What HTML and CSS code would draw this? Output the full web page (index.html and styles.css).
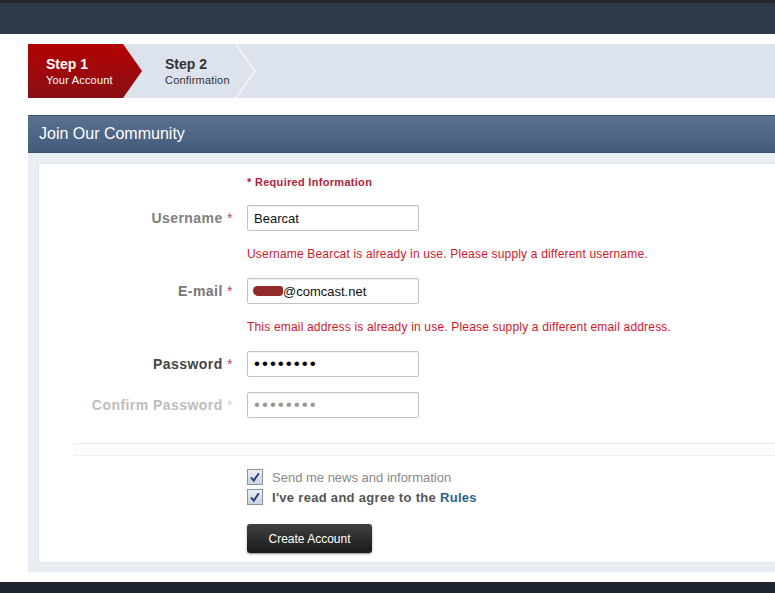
FILE: index.html
```html
<!DOCTYPE html>
<html lang="en">
<head>
    <meta charset="UTF-8">
    <meta name="viewport" content="width=device-width, initial-scale=1.0">
    <title>Join Our Community</title>
    <link rel="stylesheet" href="styles.css">
</head>
<body>
    <div class="topbar"></div>
    <div class="page">
        <!-- Step indicator -->
        <div class="steps">
            <div class="step step-active">
                <strong>Step 1</strong>
                <span>Your Account</span>
            </div>
            <div class="step">
                <strong>Step 2</strong>
                <span>Confirmation</span>
            </div>
            <svg class="step-sep" width="22" height="54" viewBox="0 0 22 54">
                <polyline points="1,0 20,27 1,54" fill="none" stroke="#f2f5f9" stroke-width="1.5"/>
            </svg>
        </div>

        <div class="box">
            <h2 class="box-title">Join Our Community</h2>
            <div class="box-body">
                <form class="panel" id="signup-form">
                    <p class="required">* Required Information</p>

                    <div class="row">
                        <label class="label label-user" for="username">Username <em>*</em></label>
                        <input type="text" id="username" class="field" value="Bearcat">
                    </div>
                    <p class="error">Username Bearcat is already in use. Please supply a different username.</p>

                    <div class="row">
                        <label class="label label-mail" for="email">E-mail <em>*</em></label>
                        <div class="field-wrap">
                            <input type="text" id="email" class="field field-mail" value="@comcast.net">
                            <span class="redacted"></span>
                        </div>
                    </div>
                    <p class="error">This email address is already in use. Please supply a different email address.</p>

                    <div class="row">
                        <label class="label" for="password">Password <em>*</em></label>
                        <input type="password" id="password" class="field field-pass" value="password">
                    </div>

                    <div class="row">
                        <label class="label label-faded" for="confirm">Confirm Password <em>*</em></label>
                        <input type="password" id="confirm" class="field field-pass field-faded" value="password">
                    </div>

                    <div class="divider"></div>

                    <div class="checks">
                        <label class="check">
                            <svg width="16" height="16" viewBox="0 0 16 16">
                                <defs>
                                    <linearGradient id="cb" x1="0" y1="0" x2="0" y2="1">
                                        <stop offset="0" stop-color="#eef2f6"/>
                                        <stop offset="1" stop-color="#c8d1dc"/>
                                    </linearGradient>
                                </defs>
                                <rect x="0.5" y="0.5" width="15" height="15" fill="url(#cb)" stroke="#8594a6"/>
                                <path d="M4 8.3 L6.8 11.6 L11.8 4.2" fill="none" stroke="#25427c" stroke-width="2"/>
                            </svg>
                            <span class="check-news">Send me news and information</span>
                        </label>
                        <label class="check">
                            <svg width="16" height="16" viewBox="0 0 16 16">
                                <rect x="0.5" y="0.5" width="15" height="15" fill="url(#cb)" stroke="#8594a6"/>
                                <path d="M4 8.3 L6.8 11.6 L11.8 4.2" fill="none" stroke="#25427c" stroke-width="2"/>
                            </svg>
                            <span class="check-rules">I've read and agree to the <a href="#">Rules</a></span>
                        </label>
                    </div>

                    <button type="submit" class="btn">Create Account</button>
                </form>
            </div>
        </div>
    </div>
    <div class="footer"></div>
</body>
</html>
```

FILE: styles.css
```css
html, body {
    margin: 0;
    padding: 0;
    overflow: hidden;
}

body {
    font-family: "Liberation Sans", Arial, sans-serif;
    background-color: #fff;
    height: 593px;
}

.topbar {
    height: 34px;
    box-sizing: border-box;
    border-top: 3px solid #23282f;
    background-color: #303b49;
}

.page {
    width: 800px;
    margin: 10px 0 0 28px;
}

/* steps */
.steps {
    display: flex;
    height: 54px;
    background-color: #dce3ec;
}

.step {
    display: flex;
    flex-direction: column;
    justify-content: center;
    box-sizing: border-box;
    width: 93px;
    padding-left: 23px;
    color: #333;
}

.step strong {
    font-size: 14px;
    line-height: 17px;
}

.step span {
    font-size: 11px;
    line-height: 14px;
    letter-spacing: 0.2px;
}

.step-active {
    width: 114px;
    padding-left: 18px;
    color: #fff;
    background: linear-gradient(#b40303, #880f14);
    clip-path: polygon(0 0, 95px 0, 114px 50%, 95px 100%, 0 100%);
}

.step-sep {
    display: block;
}

/* box */
.box {
    margin-top: 17px;
}

.box-title {
    margin: 0;
    height: 38px;
    box-sizing: border-box;
    border-top: 1px solid #3d5868;
    border-bottom: 1px solid #3c4f77;
    padding-left: 11px;
    background: linear-gradient(#5a7190, #445b7c);
    color: #fff;
    font-size: 16px;
    font-weight: normal;
    line-height: 36px;
}

.box-body {
    background-color: #e9eef2;
    padding: 10px 0 9px 10px;
}

.panel {
    background-color: #fff;
    border: 1px solid #dde4ea;
    border-right: none;
    padding: 11px 0 9px 0;
}

.required {
    margin: 0 0 0 208px;
    font-size: 11px;
    line-height: 14px;
    font-weight: bold;
    letter-spacing: 0.3px;
    color: #b2233a;
}

.row {
    display: flex;
    align-items: center;
    margin-top: 16px;
}

.row + .row {
    margin-top: 15px;
}

.error + .row {
    margin-top: 16px;
}

.label {
    width: 194px;
    margin-right: 14px;
    text-align: right;
    font-size: 14px;
    font-weight: bold;
    letter-spacing: 0.45px;
    color: #444;
}

.label em {
    font-style: normal;
    font-weight: normal;
    color: #c04a5c;
}

.label-user {
    color: #808080;
}

.label-mail {
    color: #767676;
}

.label-faded {
    color: #bdbdbd;
}

.label-faded em {
    color: #cfcfcf;
}

.field {
    width: 172px;
    height: 26px;
    box-sizing: border-box;
    border: 1px solid #c2c2c2;
    border-radius: 2px;
    padding: 0 6px;
    font-family: "Liberation Sans", Arial, sans-serif;
    font-size: 13px;
    color: #111;
    box-shadow: inset 0 1px 1px rgba(0, 0, 0, 0.06);
}

.field-wrap {
    position: relative;
}

.field-mail {
    padding-left: 35px;
}

.redacted {
    position: absolute;
    left: 6px;
    top: 8px;
    width: 30px;
    height: 10px;
    border-radius: 5px 3px 4px 6px;
    background-color: #932a2a;
}

.field-pass {
    font-size: 17px;
    letter-spacing: 2px;
    color: #000;
}

.field-faded {
    color: #9a9a9a;
}

.error {
    margin: 15px 0 0 208px;
    font-size: 12px;
    line-height: 16px;
    letter-spacing: 0.18px;
    color: #d3162c;
}

.row + .error {
    margin-top: 15px;
}

.divider {
    margin: 25px 0 0 34px;
    height: 11px;
    border-top: 1px solid #eeeeee;
    border-bottom: 1px solid #f0f0f0;
    background-color: #fcfcfc;
}

.checks {
    margin: 11px 0 0 208px;
}

.check {
    display: flex;
    align-items: center;
    height: 20px;
    font-size: 13px;
}

.check svg {
    margin-right: 9px;
}

.check-news {
    color: #888;
}

.check-rules {
    font-weight: bold;
    letter-spacing: 0.3px;
    color: #555;
}

.check-rules a {
    color: #2e5f8c;
    text-decoration: none;
}

.btn {
    display: block;
    margin: 17px 0 0 208px;
    width: 125px;
    height: 29px;
    border: none;
    border-radius: 3px;
    background: linear-gradient(#404040, #1a1a1a);
    box-shadow: 0 1px 2px rgba(0, 0, 0, 0.45);
    color: #fff;
    font-family: "Liberation Sans", Arial, sans-serif;
    font-size: 12px;
    cursor: pointer;
}

.footer {
    margin-top: 10px;
    height: 20px;
    background-color: #1f2530;
}
```
